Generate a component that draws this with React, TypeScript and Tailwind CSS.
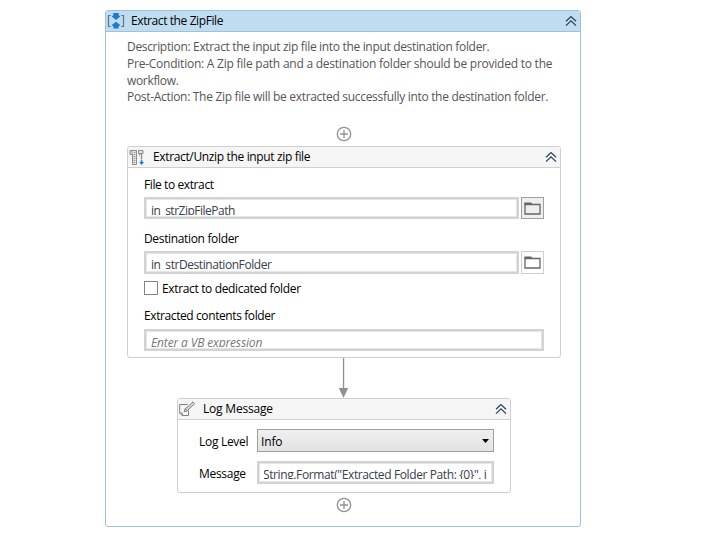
import type { ReactNode } from "react";

function Collapse({ color = "#2b4257" }: { color?: string }) {
  return (
    <svg width="12" height="12" viewBox="0 0 12 12" fill="none" stroke={color} strokeWidth="1.25">
      <path d="M1 6.3 6 1.5l5 4.8M1 10.6 6 5.8l5 4.8" />
    </svg>
  );
}

function AddPoint() {
  return (
    <svg width="16" height="16" viewBox="0 0 16 16" fill="none" stroke="#919191" strokeWidth="1.3">
      <circle cx="8" cy="8" r="6.7" />
      <path d="M8 4v8M4 8h8" />
    </svg>
  );
}

function SequenceIcon() {
  return (
    <svg width="18" height="18" viewBox="0 0 18 18">
      <path d="M3.700 3.500H1.500v11h2.200M14.300 3.500h2.200v11h-2.200" fill="none" stroke="#66747f" strokeWidth="1.200" />
      <path d="M6.300 1h5.400v2.800h1.500v.7L9 8 4.800 4.500v-.7h1.500zM9 9.700l4.200 3.200v.8h-1.500v2.800H6.300v-2.800H4.800v-.8z" fill="#1f78d4" />
    </svg>
  );
}

function ZipIcon() {
  return (
    <svg width="16" height="17" viewBox="0 0 16 17" fill="none">
      <path d="M1 1.500h6.500v14H3.500V5.500H1zM9.500 1.500h4.500v3H9.500zM10.500 4.500v2" stroke="#8b8b8b" fill="#e4e4e4" />
      <path d="M3 1.500v4M5.500 3v12" stroke="#8f8f8f" strokeDasharray="1 1" strokeWidth="1.500" />
      <path d="M12.500 4.500v6" stroke="#8b8b8b" strokeWidth="1.300" />
      <path d="M11.700 11.200h1.800v1.800h1.500l-2.400 3-2.400-3h1.500z" fill="#1f78d4" />
    </svg>
  );
}

function LogIcon() {
  return (
    <svg width="17" height="16" viewBox="0 0 17 16" fill="none" stroke="#808080">
      <path d="M8.500 3.500H.7v8.500l2.500 2.500h6.300V9.500M.7 12h2.500v2.500" />
      <path d="M5 10.800 6.200 7.800 14 .9l1.700 1.700L8.200 9.800zM6.200 7.800l2 2" fill="#d4d4d4" />
    </svg>
  );
}

function FolderIcon() {
  return (
    <svg width="17" height="13" viewBox="0 0 17 13" fill="none">
      <path d="M1 12V2.500h15V12z" stroke="#666" strokeWidth="1.300" />
      <path d="M.4 3V.5H7L8.500 2v1z" fill="#666" />
    </svg>
  );
}

function CardHeader({ icon, title, tracking }: { icon: ReactNode; title: string; tracking: string }) {
  return (
    <div className="flex h-[21px] items-center border-b border-[#cfcfcf] bg-[#f5f5f5] pr-[3px]">
      <div className="flex w-[25px] shrink-0 pl-[1px]">{icon}</div>
      <span className={`flex-1 leading-4 ${tracking}`}>{title}</span>
      <Collapse />
    </div>
  );
}

/* Expression editor: the single text line is clipped just under its baseline. */
function Expression({ children, className }: { children: ReactNode; className: string }) {
  return (
    <div className={`border-2 border-[#d2d2d2] bg-white ${className}`}>
      <div className="h-full border border-[#e6e6e6] px-1">
        <div className="h-[15px] overflow-hidden whitespace-nowrap pt-[3px] leading-4 text-[#36404c]">{children}</div>
      </div>
    </div>
  );
}

export default function App() {
  return (
    <main className="h-[552px] w-[717px] overflow-hidden bg-white pl-[105px] pt-[10px] font-['Open_Sans','Noto_Sans',sans-serif] text-[12px] text-black">
      <section className="flex h-[517px] w-[476px] flex-col rounded-[3px] border border-[#9dc2dc] bg-white">
        <header className="flex h-[21px] shrink-0 items-center rounded-t-[2px] border-b border-[#9dc2dc] bg-[#c0dcf0] pr-[3px]">
          <div className="w-[25px] shrink-0 pl-[1px]"><SequenceIcon /></div>
          <h1 className="flex-1 leading-4 tracking-[-0.4px]">Extract the ZipFile</h1>
          <Collapse />
        </header>

        <div className="ml-[21px] mt-[7px] h-[67px] shrink-0 whitespace-nowrap leading-[16.8px] text-[#555]">
          <p className="tracking-[-0.33px]">Description: Extract the input zip file into the input destination folder.</p>
          <p className="tracking-[-0.235px]">Pre-Condition: A Zip file path and a destination folder should be provided to the</p>
          <p className="tracking-[-0.33px]">workflow.</p>
          <p className="tracking-[-0.305px]">Post-Action: The Zip file will be extracted successfully into the destination folder.</p>
        </div>

        <div className="ml-[230px] mt-5 h-5 shrink-0"><AddPoint /></div>

        <section className="ml-[21px] h-[212px] w-[434px] shrink-0 overflow-hidden rounded-[3px] border border-[#cfcfcf]">
          <CardHeader icon={<ZipIcon />} title="Extract/Unzip the input zip file" tracking="tracking-[-0.35px]" />
          <div className="flex flex-col items-start pl-4">
            <div className="mt-[9px] h-5 leading-4 tracking-[-0.4px]">File to extract</div>
            <div className="flex gap-[2px]">
              <Expression className="h-[22px] w-[375px]"><span className="tracking-[-0.5px]">in_strZipFilePath</span></Expression>
              <button className="flex h-[22px] w-[23px] items-center justify-center border border-[#a0a0a0] bg-[#eeeeee]"><FolderIcon /></button>
            </div>
            <div className="mt-3 h-5 leading-4 tracking-[-0.34px]">Destination folder</div>
            <div className="flex gap-[2px]">
              <Expression className="h-[23px] w-[375px]"><span className="tracking-[-0.43px]">in_strDestinationFolder</span></Expression>
              <button className="flex h-[23px] w-[23px] items-center justify-center border border-[#cfcfcf] bg-white"><FolderIcon /></button>
            </div>
            <label className="mt-[7px] flex h-4 items-start gap-1">
              <span className="h-[14px] w-[14px] border border-[#858585] bg-white" />
              <span className="leading-4 tracking-[-0.35px]">Extract to dedicated folder</span>
            </label>
            <div className="mt-[11px] h-[21px] leading-4 tracking-[-0.4px]">Extracted contents folder</div>
            <Expression className="h-[22px] w-[400px]"><span className="italic tracking-[-0.14px] text-[#777]">Enter a VB expression</span></Expression>
          </div>
        </section>

        <svg className="ml-[232px] shrink-0" width="11" height="40" viewBox="0 0 11 40" fill="#919191">
          <path d="M4.900 0h1.300v30h4L5.500 40 .8 30h4.100z" />
        </svg>

        <section className="ml-[71px] h-[95px] w-[334px] shrink-0 overflow-hidden rounded-[3px] border border-[#cfcfcf]">
          <CardHeader icon={<LogIcon />} title="Log Message" tracking="tracking-[-0.2px]" />
          <div className="mt-[9px] flex h-[23px] items-center pl-[21px]">
            <span className="w-[58px] pt-[2px] leading-4 tracking-[-0.3px]">Log Level</span>
            <div className="flex h-[23px] w-[237px] items-center justify-between border border-[#a0a0a0] bg-gradient-to-b from-[#efefef] to-[#e3e3e3] pl-[3px] pr-[4px]">
              <span className="pt-[2px] leading-4 tracking-[-0.13px]">Info</span>
              <svg width="7" height="4" viewBox="0 0 7 4"><path d="M0 0h7L3.500 4z" /></svg>
            </div>
          </div>
          <div className="mt-[9px] flex h-[23px] items-center pl-[21px]">
            <span className="w-[58px] pt-[2px] leading-4 tracking-[-0.3px]">Message</span>
            <Expression className="h-[23px] w-[237px]"><span className="-ml-px tracking-[-0.385px]">String.Format("Extracted Folder Path: {"{0}"}", in_strDestinationFolder)</span></Expression>
          </div>
        </section>
        <div className="ml-[230px] mt-[4px] shrink-0"><AddPoint /></div>
      </section>
    </main>
  );
}
